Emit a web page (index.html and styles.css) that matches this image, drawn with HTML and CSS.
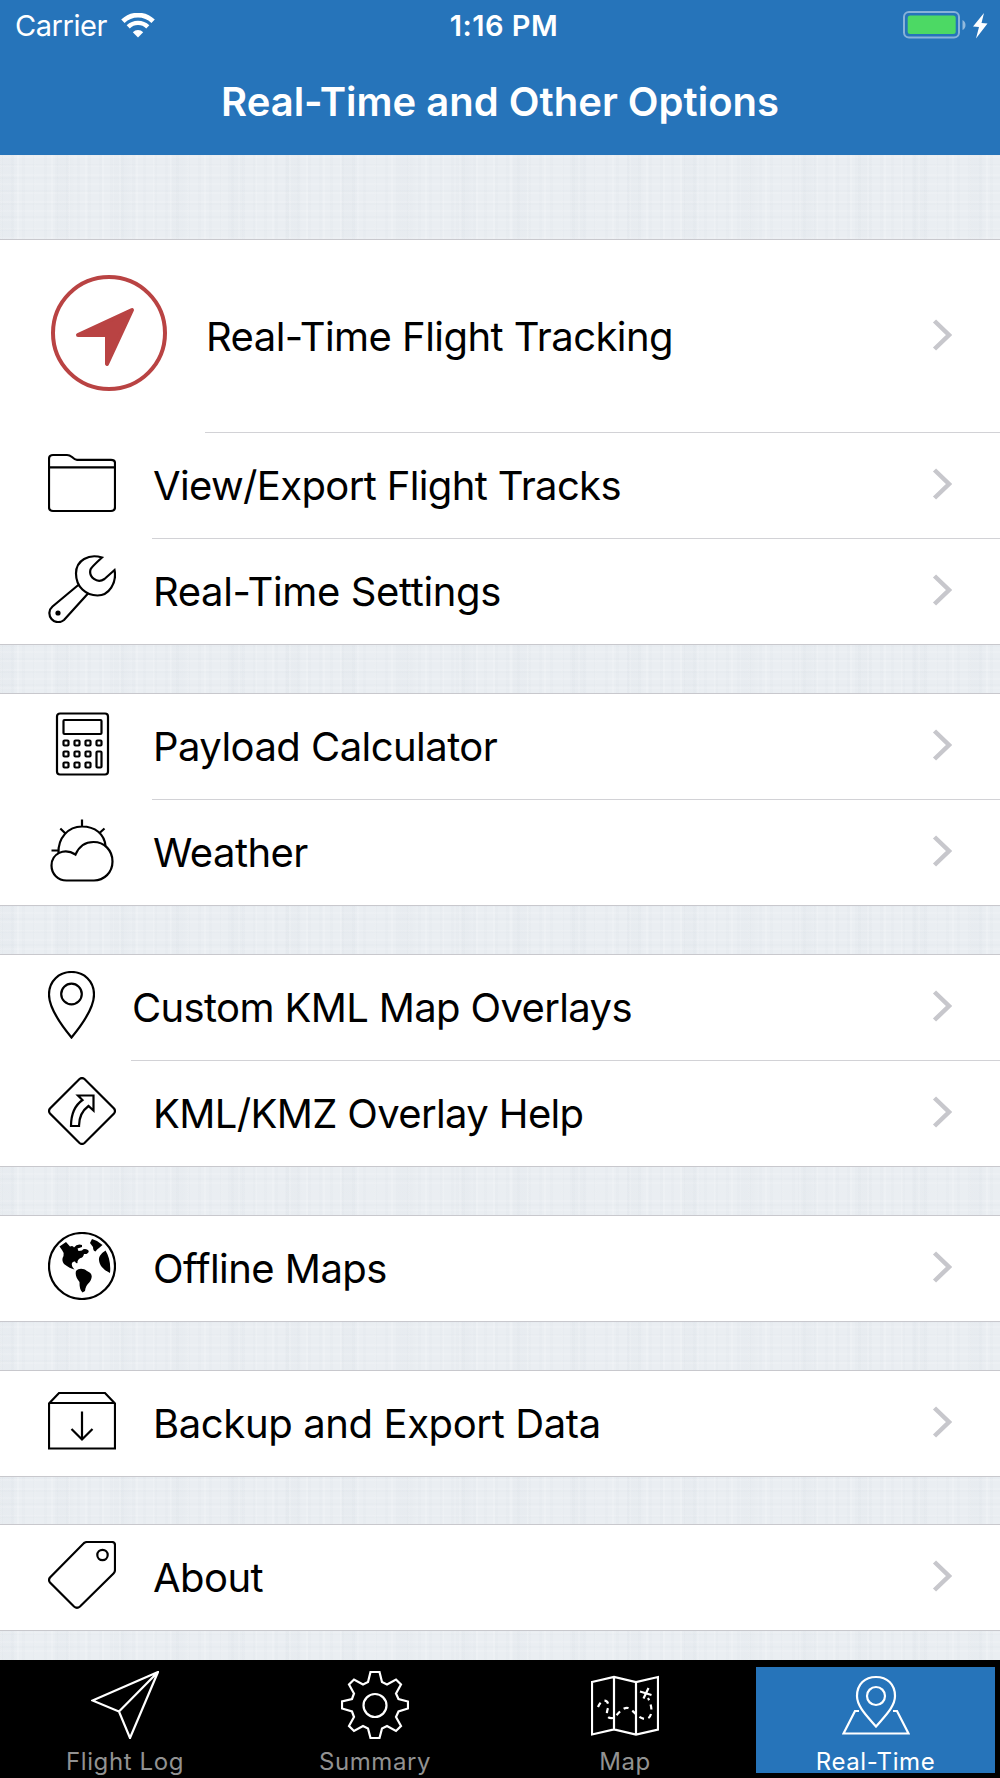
FILE: index.html
```html
<!DOCTYPE html>
<html lang="en">
<head>
  <meta charset="UTF-8">
  <meta name="viewport" content="width=device-width, initial-scale=1.0">
  <title>Real-Time and Other Options</title>
  <link rel="stylesheet" href="styles.css">
</head>
<body>

  <!-- shared chevron -->
  <svg class="defs" width="0" height="0">
    <symbol id="chevron" viewBox="0 0 20 32">
      <path d="M2.500 2 L17 16 L2.500 30" fill="none" stroke="#c7c7cc" stroke-width="4.500"/>
    </symbol>
  </svg>

  <header class="header">
    <div class="status-bar">
      <div class="status-left">
        <span class="carrier">Carrier</span>
        <svg class="wifi" width="34" height="25" viewBox="0 0 34 25">
          <g fill="none" stroke="#fff">
            <path d="M1.9 8.3 A21.5 21.5 0 0 1 32.1 8.3" stroke-width="4.8"/>
            <path d="M7.2 13.9 A14 14 0 0 1 26.8 13.9" stroke-width="4.4"/>
          </g>
          <path d="M17 24.5 L11.8 19.2 A7.4 7.4 0 0 1 22.2 19.2 Z" fill="#fff"/>
        </svg>
      </div>
      <span class="clock">1:16 PM</span>
      <div class="status-right">
        <svg width="86" height="28" viewBox="0 0 86 28">
          <rect x="1" y="1" width="55" height="25.5" rx="5" fill="none" stroke="#fff" stroke-opacity="0.45" stroke-width="2"/>
          <rect x="4.7" y="4.5" width="48" height="18.5" rx="2.5" fill="#4cd964"/>
          <path d="M59.5 9 Q62.5 10.5 62.5 14 Q62.5 17.5 59.5 19 Z" fill="#fff" fill-opacity="0.5"/>
          <path d="M81 2 L70 15.5 L76 16 L73 27.5 L84.5 12.5 L78.5 12 Z" fill="#fff"/>
        </svg>
      </div>
    </div>
    <h1 class="title">Real-Time and Other Options</h1>
  </header>

  <main class="options">
    <section class="group">
      <a class="row row-large">
        <svg class="icon-large" width="116" height="116" viewBox="0 0 116 116">
          <circle cx="58" cy="58" r="56" fill="none" stroke="#b94343" stroke-width="4"/>
          <path d="M27 60 L81 35 L56 89 L56 60 Z" fill="#b94343" stroke="#b94343" stroke-width="4" stroke-linejoin="round"/>
        </svg>
        <div class="cell">
          <span class="label">Real-Time Flight Tracking</span>
          <svg class="chevron"><use href="#chevron"/></svg>
        </div>
      </a>
      <a class="row">
        <svg class="icon" viewBox="0 0 68 68">
          <path d="M1 57 V10 Q1 6 5 6 H19 Q21.500 6 24 8 Q27 10.800 29 10.800 H63 Q67 10.800 67 14 V58 Q67 62 63 62 H5 Q1 62 1 58 Z M1 18.300 H67"/>
        </svg>
        <div class="cell">
          <span class="label label-tight">View/Export Flight Tracks</span>
          <svg class="chevron"><use href="#chevron"/></svg>
        </div>
      </a>
      <a class="row">
        <svg class="icon" viewBox="0 0 68 68">
          <path d="M54 2.500 C41 -1.500 28 5 28 18.500 C28 32 38 40.500 49.500 40.500 C61 40.500 69 28 66.500 15 L56.500 24 C49 29 40.500 22 42.500 14.500 Q43 12.500 54 2.500 Z M31.500 29 L4.500 51.500 A8.800 8.800 0 0 0 16 65 L40 38.500"/>
          <circle class="solid" cx="10" cy="58" r="2.600"/>
        </svg>
        <div class="cell">
          <span class="label label-loose">Real-Time Settings</span>
          <svg class="chevron"><use href="#chevron"/></svg>
        </div>
      </a>
    </section>

    <section class="group">
      <a class="row">
        <svg class="icon" viewBox="0 0 68 68">
          <rect x="9" y="3.500" width="51" height="61" rx="3"/>
          <rect x="15.500" y="10" width="38" height="14" rx="1"/>
          <rect x="15.500" y="30.500" width="5" height="5" rx="1"/>
          <rect x="26.500" y="30.500" width="5" height="5" rx="1"/>
          <rect x="37.500" y="30.500" width="5" height="5" rx="1"/>
          <rect x="48.500" y="30.500" width="5" height="5" rx="1"/>
          <rect x="15.500" y="41.500" width="5" height="5" rx="1"/>
          <rect x="26.500" y="41.500" width="5" height="5" rx="1"/>
          <rect x="37.500" y="41.500" width="5" height="5" rx="1"/>
          <rect x="48.500" y="41.500" width="5" height="16" rx="1"/>
          <rect x="15.500" y="52.500" width="5" height="5" rx="1"/>
          <rect x="26.500" y="52.500" width="5" height="5" rx="1"/>
          <rect x="37.500" y="52.500" width="5" height="5" rx="1"/>
        </svg>
        <div class="cell">
          <span class="label">Payload Calculator</span>
          <svg class="chevron"><use href="#chevron"/></svg>
        </div>
      </a>
      <a class="row">
        <svg class="icon" viewBox="0 0 68 68">
          <path d="M27.500 38.500 C31 30.500 37 26 45.500 26 C56.500 26 64.500 34.500 64.500 45.500 C64.500 56.500 56 64.500 46 64.500 H18.500 C10 64.500 3.500 58 3.500 49.500 C3.500 38 16 31 27.500 38.500 Z"/>
          <path d="M10.500 37 C10 22 20 10.500 34 10.500 C47 10.500 56.500 18 57.500 30 M34 10.500 V3.500 M12.300 12.500 L17 17 M56.500 12.500 L51.500 17 M3.500 34.500 H10.500"/>
        </svg>
        <div class="cell">
          <span class="label">Weather</span>
          <svg class="chevron"><use href="#chevron"/></svg>
        </div>
      </a>
    </section>

    <section class="group">
      <a class="row">
        <svg class="icon icon-narrow" viewBox="0 0 47 68">
          <path d="M23.500 66.500 C14 55 1 37 1 23.500 C1 10 11 1 23.500 1 C36 1 46 10 46 23.500 C46 37 33 55 23.500 66.500 Z"/>
          <circle cx="23.500" cy="23" r="10.300"/>
        </svg>
        <div class="cell">
          <span class="label label-tight">Custom KML Map Overlays</span>
          <svg class="chevron"><use href="#chevron"/></svg>
        </div>
      </a>
      <a class="row">
        <svg class="icon" viewBox="0 0 68 68">
          <path d="M31.500 2 Q34 0 36.500 2 L66 31.500 Q68 34 66 36.500 L36.500 66 Q34 68 31.500 66 L2 36.500 Q0 34 2 31.500 Z"/>
          <path d="M30 18.500 H45.500 V33.500 L40.500 29 C35 33 31 40 31 49 H23 C23 38 26 29 34.500 23 Z"/>
        </svg>
        <div class="cell">
          <span class="label label-tight">KML/KMZ Overlay Help</span>
          <svg class="chevron"><use href="#chevron"/></svg>
        </div>
      </a>
    </section>

    <section class="group single">
      <a class="row">
        <svg class="icon" viewBox="0 0 68 68">
          <circle cx="34" cy="34" r="33"/>
          <g class="solid">
            <path d="M11.500 14.500 L18 10 L22 14.500 Q25 13 26 15.500 Q29 11.500 34 13 L34 15 L29.500 16.500 L30.500 19 L34 18.500 Q36 16 40 18 Q42 20 38.500 22 L36 22 Q35 26 32.500 26 Q29 28 29.500 31 Q28 32 27 29.500 Q25 29 24 31 Q23 34 26.500 37.500 Q22 36.500 16 32 Q13 28 15.500 24 Q16 20 14 18 Z"/>
            <path d="M42 11 L44 7 L49 9 L54.500 13 L51 16 Q49 17 47.500 19.500 Q45 19 45 15 Z"/>
            <path d="M57.500 18.500 C54 21 50.500 24 51 28 C51.500 34 56 38 62 41 C63 32 61 24 57.500 18.500 Z"/>
            <path d="M28 39 C31 35.500 36 36.500 39 39 C42 40.500 44.500 42 43.500 46 C42 52 38 51 37 59 L34.500 60.500 C32 58 31.500 55 31.500 50 C28.500 46 27 43 28 39 Z"/>
          </g>
        </svg>
        <div class="cell">
          <span class="label">Offline Maps</span>
          <svg class="chevron"><use href="#chevron"/></svg>
        </div>
      </a>
    </section>

    <section class="group single">
      <a class="row">
        <svg class="icon" viewBox="0 0 68 68">
          <path d="M1 16.500 L11 6 H57 L67 16.500 V61.500 H1 Z M1 16 H67 M34 24.500 V52.500 M23.500 42 L34 52.500 L44.500 42"/>
        </svg>
        <div class="cell">
          <span class="label label-loose">Backup and Export Data</span>
          <svg class="chevron"><use href="#chevron"/></svg>
        </div>
      </a>
    </section>

    <section class="group single">
      <a class="row">
        <svg class="icon" viewBox="0 0 68 68">
          <path d="M36 2 Q37.500 1 39 1 H64 Q67 1 67 4 V29 Q67 31 65.500 32.500 L32 65.500 Q29 68 26 65.500 L2 41.500 Q0 39 2 36.500 Z"/>
          <circle cx="54.500" cy="14" r="5.200"/>
        </svg>
        <div class="cell">
          <span class="label">About</span>
          <svg class="chevron"><use href="#chevron"/></svg>
        </div>
      </a>
    </section>
  </main>

  <nav class="tab-bar">
    <a class="tab">
      <svg class="tab-icon" viewBox="0 0 68 68">
        <path d="M67 1 L1.500 29.500 L28 40.500 L39 67 Z M67 1 L28 40.500"/>
      </svg>
      <span>Flight Log</span>
    </a>
    <a class="tab">
      <svg class="tab-icon" viewBox="0 0 68 68">
        <path d="M29.500 1 H38.500 L41 11 L46 13.500 L55 8.500 L60 13.500 L55 22.500 L57.500 28 L67 30.500 V37.500 L57.500 40.500 L55 46 L60 55 L55 60 L46 55 L41 57.500 L38.500 67 H29.500 L27 57.500 L22 55 L13 60 L8 55 L13 46 L11 40.500 L1 37.500 V30.500 L11 28 L13 22.500 L8 13.500 L13 8.500 L22 13.500 L27 11 Z"/>
        <circle cx="34" cy="34.500" r="11.500"/>
      </svg>
      <span>Summary</span>
    </a>
    <a class="tab">
      <svg class="tab-icon" viewBox="0 0 68 68">
        <path d="M1 11 L23 6 L45 11 L67 6 V58.500 L45 63.500 L23 58.500 L1 63.500 Z M23 6 V58.500 M45 11 V63.500"/>
        <path stroke-dasharray="5 4.500" d="M7 36 C11 26 19 29 17 37 C15 43 15 48 22 47 C27 44 31 36 37 37 C43 39 46 47 54 48 C62 48 62 36 57 27"/>
        <path d="M57.500 17 L52.500 27.500 M49 20.500 L60.500 24"/>
      </svg>
      <span>Map</span>
    </a>
    <a class="tab active">
      <svg class="tab-icon" viewBox="0 0 68 68">
        <path d="M34 55.500 C26 46 15 36 15 25 C15 13 23 6 34 6 C45 6 53 13 53 25 C53 36 42 46 34 55.500 Z"/>
        <circle cx="34" cy="25" r="9"/>
        <path d="M17 40 H13 L1.500 62.500 H66.500 L55 40 H51"/>
      </svg>
      <span>Real-Time</span>
    </a>
  </nav>

</body>
</html>
```
FILE: styles.css
```css
* {
  box-sizing: border-box;
}

body {
  margin: 0;
  height: 1778px;
  display: flex;
  flex-direction: column;
  overflow: hidden;
  font-family: Inter, "Liberation Sans", sans-serif;
  color: #000;
  background-color: #eaeef2;
  /* linen texture */
  background-image:
    repeating-linear-gradient(90deg, rgba(110, 130, 150, 0.02) 0 3px, transparent 3px 11px),
    repeating-linear-gradient(90deg, rgba(110, 130, 150, 0.02) 0 12px, transparent 18px 57px),
    repeating-linear-gradient(90deg, rgba(255, 255, 255, 0.15) 0 2px, transparent 2px 17px),
    repeating-linear-gradient(0deg, rgba(110, 130, 150, 0.02) 0 2px, transparent 2px 13px),
    repeating-linear-gradient(0deg, rgba(255, 255, 255, 0.12) 0 2px, transparent 2px 9px);
}

.defs {
  position: absolute;
}

/* header */
.header {
  flex: none;
  height: 155px;
  background-color: #2674ba;
  color: #fff;
}

.status-bar {
  height: 50px;
  padding: 0 11px 0 15px;
  display: grid;
  grid-template-columns: 1fr auto 1fr;
  align-items: center;
}

.status-left {
  display: flex;
  align-items: center;
  gap: 14px;
}

.carrier {
  font-size: 29px;
  letter-spacing: -0.45px;
}

.clock {
  padding-left: 4px;
  font-size: 29px;
  font-weight: 600;
  letter-spacing: 0.5px;
}

.status-right {
  display: flex;
  justify-content: flex-end;
}

.title {
  margin: 0;
  text-align: center;
  font-size: 40px;
  font-weight: 600;
  line-height: 104px;
}

/* option groups */
.options {
  flex: 1;
  padding-top: 84px;
  overflow: hidden;
}

.group {
  background-color: #fff;
  border-top: 1px solid #c8c8cd;
  border-bottom: 1px solid #c8c8cd;
  margin-bottom: 48px;
}

.single {
  margin-bottom: 47.7px;
}

.row {
  display: flex;
  height: 106px;
  padding-left: 48px;
}

.row:last-child {
  height: 105px;
}

.row-large {
  height: 193px;
  padding-left: 51px;
}

.icon {
  flex: none;
  width: 68px;
  height: 68px;
  margin: 16px 36px 0 0;
  fill: none;
  stroke: #000;
  stroke-width: 2.2;
}

.icon-narrow {
  width: 47px;
}

.icon-large {
  flex: none;
  margin: 35px 38px 0 0;
}

.solid {
  fill: #000;
  stroke: none;
}

.cell {
  flex: 1;
  display: flex;
  align-items: center;
  justify-content: space-between;
  padding-right: 48px;
  border-bottom: 1px solid #d2d2d6;
}

.row:last-child .cell {
  border-bottom: none;
}

.label {
  padding-left: 1px;
  font-size: 40px;
  letter-spacing: -0.55px;
  white-space: nowrap;
}

.label-tight {
  letter-spacing: -0.64px;
}

.label-loose {
  letter-spacing: -0.38px;
}

.chevron {
  width: 20px;
  height: 32px;
  margin-bottom: 3px;
}

/* tab bar */
.tab-bar {
  flex: none;
  height: 118px;
  display: flex;
  background-color: #000;
  color: #929292;
}

.tab {
  width: 250px;
  display: flex;
  flex-direction: column;
  align-items: center;
  padding-top: 11px;
  font-size: 24px;
  letter-spacing: 0.6px;
}

.tab-icon {
  flex: none;
  width: 68px;
  height: 68px;
  margin-bottom: 8px;
  fill: none;
  stroke: #fff;
  stroke-width: 2.2;
}

.active {
  width: 239px;
  margin: 7px 5px 5px 6px;
  padding-top: 4px;
  background-color: #2674ba;
  color: #fff;
}
```
